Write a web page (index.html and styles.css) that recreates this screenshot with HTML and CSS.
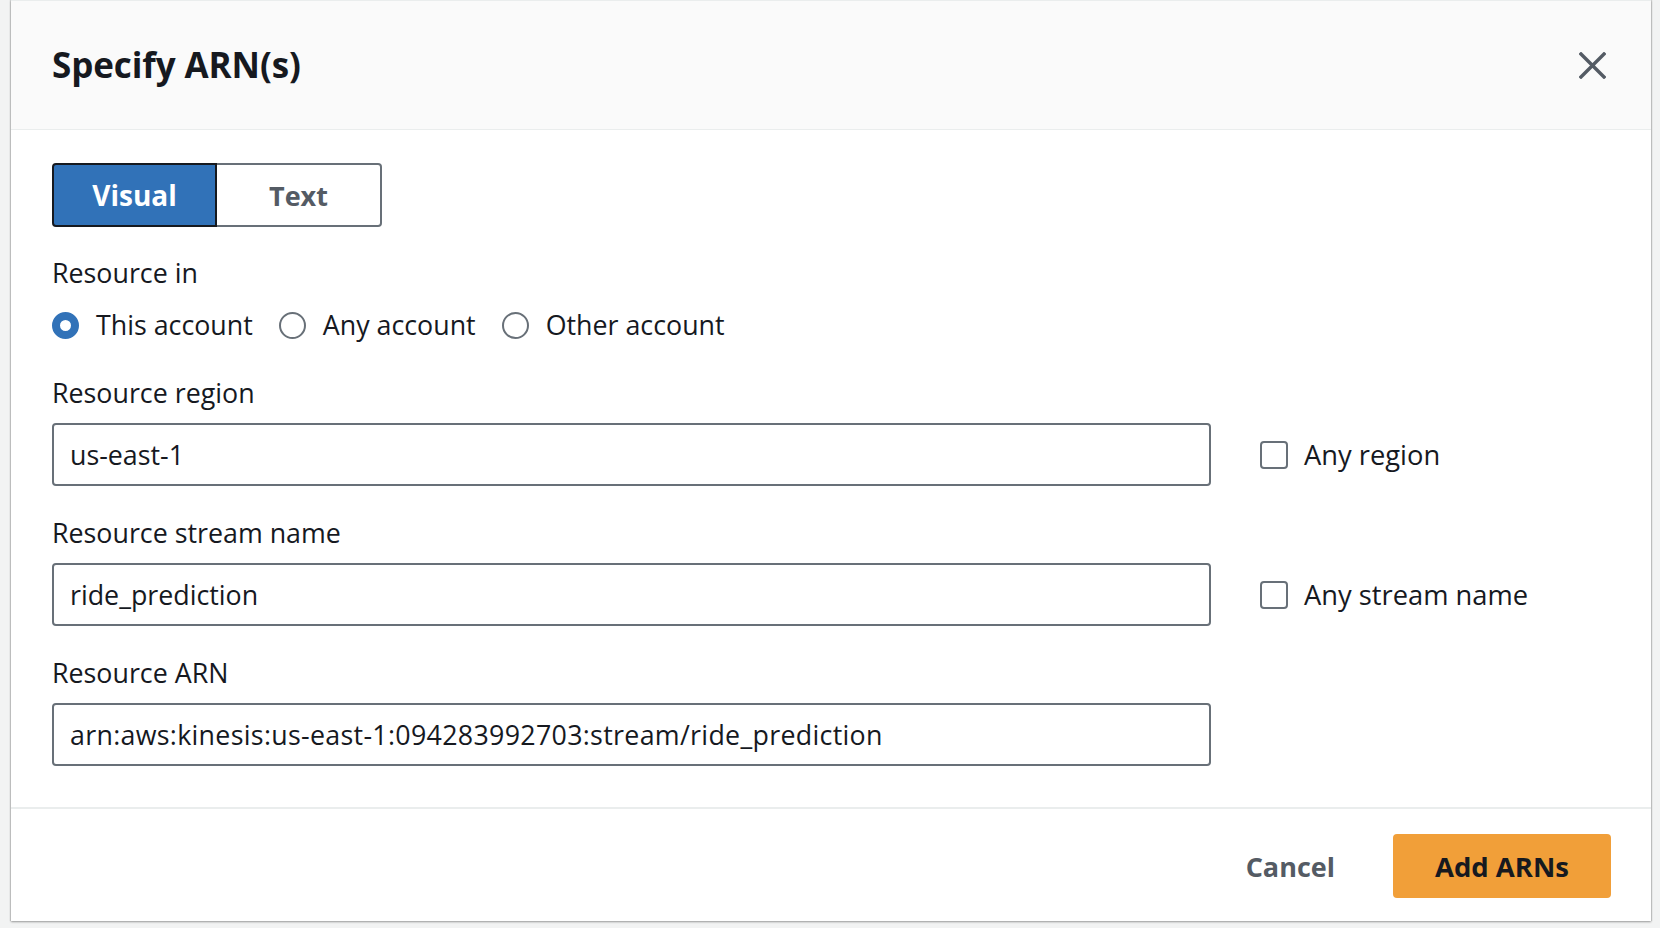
FILE: index.html
```html
<!DOCTYPE html>
<html lang="en">
<head>
<meta charset="utf-8">
<title>Specify ARN(s)</title>
<link rel="stylesheet" href="styles.css">
</head>
<body>
<div class="modal">
  <header class="modal-header">
    <h2 class="modal-title">Specify ARN(s)</h2>
    <button class="close-btn" aria-label="Close">
      <svg width="27" height="27" viewBox="0 0 27 27"><path d="M2 2 L25 25 M25 2 L2 25" stroke="#545b64" stroke-width="3.4" stroke-linecap="square" fill="none"/></svg>
    </button>
  </header>
  <main class="modal-body">
    <div class="seg">
      <button class="seg-btn seg-active">Visual</button>
      <button class="seg-btn">Text</button>
    </div>

    <div class="field-label first">Resource in</div>
    <div class="radios">
      <label class="radio"><span class="radio-circle checked"></span><span>This account</span></label>
      <label class="radio"><span class="radio-circle"></span><span>Any account</span></label>
      <label class="radio"><span class="radio-circle"></span><span>Other account</span></label>
    </div>

    <div class="field-label">Resource region</div>
    <div class="row">
      <div class="input">us-east-1</div>
      <label class="check"><span class="box"></span><span class="check-text">Any region</span></label>
    </div>

    <div class="field-label">Resource stream name</div>
    <div class="row">
      <div class="input">ride_prediction</div>
      <label class="check"><span class="box"></span><span class="check-text">Any stream name</span></label>
    </div>

    <div class="field-label">Resource ARN</div>
    <div class="row">
      <div class="input arn">arn:aws:kinesis:us-east-1:094283992703:stream/ride_prediction</div>
    </div>
  </main>
  <footer class="modal-footer">
    <button class="btn-link">Cancel</button>
    <button class="btn-primary">Add ARNs</button>
  </footer>
</div>
</body>
</html>
```
FILE: styles.css
```css
* { box-sizing: border-box; }
html, body { margin: 0; padding: 0; }
body {
  background: #f2f3f3;
  font-family: "Open Sans", "Noto Sans", sans-serif;
  color: #16191f;
  width: 1660px;
  height: 928px;
  overflow: hidden;
}
.modal {
  margin-left: 11px;
  width: 1640px;
  height: 921px;
  background: #fff;
  box-shadow: 0 1px 2px rgba(0,0,0,0.35), -1px 0 1px rgba(0,0,0,0.12), 1px 0 1px rgba(0,0,0,0.12);
  display: flex;
  flex-direction: column;
}
.modal-header {
  height: 130px;
  background: #fafafa;
  border-bottom: 1px solid #eaeded;
  border-top: 1px solid #eaeded;
  display: flex;
  align-items: center;
  justify-content: space-between;
  padding: 0 45px 0 41px;
}
.modal-title {
  margin: 0;
  font-size: 35px;
  font-weight: 700;
  line-height: 40px;
  letter-spacing: -0.1px;
}
.close-btn {
  border: 0;
  background: none;
  padding: 0;
  width: 27px;
  height: 27px;
  display: flex;
}
.modal-body {
  padding: 33px 41px 0;
  flex: 1;
}
.seg { display: flex; }
.seg-btn {
  width: 165px;
  height: 64px;
  font-family: inherit;
  font-size: 27px;
  font-weight: 700;
  background: #fff;
  color: #545b64;
  border: 2px solid #687078;
  border-left: 0;
  border-radius: 0 4px 4px 0;
  padding: 0;
}
.seg-active {
  background: #3172b8;
  color: #fff;
  border: 2px solid #16191f;
  border-radius: 4px 0 0 4px;
  font-size: 28px;
}
.field-label {
  font-size: 26.8px;
  line-height: 36px;
  margin-top: 29px;
  margin-bottom: 12px;
}
.field-label.first { margin-top: 28px; margin-bottom: 16px; }
.radios {
  display: flex;
  gap: 26px;
  font-size: 26.8px;
  line-height: 36px;
  margin-bottom: 32px;
}
.radio { display: flex; align-items: center; gap: 17px; }
.radio-circle {
  width: 27px;
  height: 27px;
  border-radius: 50%;
  border: 2px solid #687078;
  background: #fff;
}
.radio-circle.checked {
  border: 8px solid #3172b8;
}
.row {
  display: flex;
  align-items: center;
  gap: 49px;
}
.input {
  width: 1159px;
  height: 63px;
  border: 2px solid #687078;
  border-radius: 4px;
  padding: 0 16px;
  display: flex;
  align-items: center;
  font-size: 26.8px;
}
.input.arn { letter-spacing: 0.3px; }
.check {
  display: flex;
  align-items: center;
  gap: 16px;
  font-size: 27.3px;
}
.box {
  width: 28px;
  height: 28px;
  border: 2px solid #687078;
  border-radius: 4px;
}
.modal-footer {
  margin-top: 41px;
  border-top: 2px solid #eaeded;
  height: 114px;
  display: flex;
  align-items: flex-start;
  justify-content: flex-end;
  padding: 25px 40px 0 0;
  gap: 20px;
}
.btn-link {
  border: 0;
  background: none;
  font-family: inherit;
  font-size: 27px;
  font-weight: 700;
  color: #545b64;
  height: 64px;
  padding: 0 38px;
}
.btn-primary {
  width: 218px;
  height: 64px;
  border: 0;
  border-radius: 4px;
  background: #f19f39;
  color: #16191f;
  font-family: inherit;
  font-size: 27.5px;
  font-weight: 700;
}
```
